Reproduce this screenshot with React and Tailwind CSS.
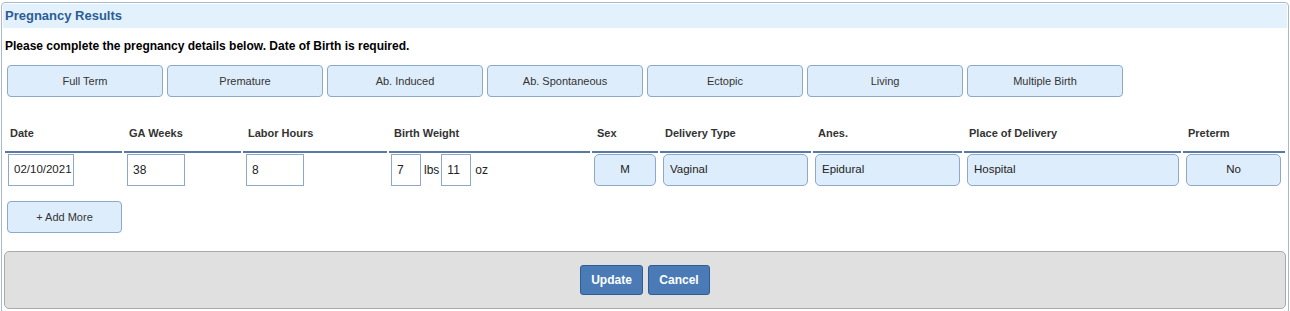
import React from "react";

const tabs = ["Full Term", "Premature", "Ab. Induced", "Ab. Spontaneous", "Ectopic", "Living", "Multiple Birth"];
const cols = ["Date", "GA Weeks", "Labor Hours", "Birth Weight", "Sex", "Delivery Type", "Anes.", "Place of Delivery", "Preterm"];

function TextBox({ value, w, size = "text-[12px]" }) {
  return (
    <div className={`h-[32px] border border-[#8ea8c8] bg-white flex items-center px-[5px] text-[#222] ${size} ${w}`}>
      {value}
    </div>
  );
}

function SelectBox({ value, w, center }) {
  return (
    <div
      className={`h-[32px] border border-[#8ea8c8] bg-[#deedfb] rounded-[5px] flex items-center text-[11.5px] text-[#222] ${
        center ? "justify-center" : "px-[6px]"
      } ${w}`}
    >
      {value}
    </div>
  );
}

export default function App() {
  return (
    <div className="bg-white min-h-[311px]" style={{ fontFamily: '"Liberation Sans", Arial, sans-serif' }}>
      <div className="ml-[1px] mt-[2px] w-[1288px] border border-[#a9b8cc] rounded-t-[4px] p-[1px] pb-[6px]">
        <div className="h-[24px] bg-[#e3f1fd] flex items-center pl-[2px] text-[13px] font-bold text-[#2b5c96]">
          Pregnancy Results
        </div>
        <div className="mt-[11px] pl-[2px] text-[12px] leading-[14px] font-bold text-black">
          Please complete the pregnancy details below. Date of Birth is required.
        </div>
        <div className="mt-[12px] pl-[4px] flex gap-[4px]">
          {tabs.map((t) => (
            <div
              key={t}
              className="w-[156px] h-[32px] border border-[#8ea8c8] bg-[#deedfb] rounded-[4px] flex items-center justify-center text-[11px] text-[#333]"
            >
              {t}
            </div>
          ))}
        </div>
        <div className="mt-[29px] pl-[2px] grid grid-cols-[117px_117px_144px_201px_66px_151px_149px_217px_102px] gap-x-[2px]">
          {cols.map((c) => (
            <div
              key={c}
              className="border-b-2 border-[#5a7aa6] pl-[5px] pb-[11px] text-[11px] leading-[14px] font-bold text-[#333]"
            >
              {c}
            </div>
          ))}
          <div className="pt-[1px] pl-[3px]">
            <TextBox value="02/10/2021" w="w-[66px]" size="text-[11.5px]" />
          </div>
          <div className="pt-[1px] pl-[3px]">
            <TextBox value="38" w="w-[58px]" />
          </div>
          <div className="pt-[1px] pl-[3px]">
            <TextBox value="8" w="w-[58px]" />
          </div>
          <div className="pt-[1px] pl-[2px] flex items-center">
            <TextBox value="7" w="w-[30px]" />
            <span className="ml-[3px] mr-[2px] text-[12px] text-[#222]">lbs</span>
            <TextBox value="11" w="w-[30px]" />
            <span className="ml-[4px] text-[12px] text-[#222]">oz</span>
          </div>
          <div className="pt-[1px] pl-[2px]">
            <SelectBox value="M" w="w-[62px]" center />
          </div>
          <div className="pt-[1px] pl-[3px]">
            <SelectBox value="Vaginal" w="w-[145px]" />
          </div>
          <div className="pt-[1px] pl-[2px]">
            <SelectBox value="Epidural" w="w-[145px]" />
          </div>
          <div className="pt-[1px] pl-[3px]">
            <SelectBox value="Hospital" w="w-[212px]" />
          </div>
          <div className="pt-[1px] pl-[3px]">
            <SelectBox value="No" w="w-[95px]" center />
          </div>
        </div>
        <div className="mt-[15px] pl-[4px]">
          <div className="w-[115px] h-[32px] border border-[#8ea8c8] bg-[#deedfb] rounded-[4px] flex items-center justify-center text-[11px] text-[#333]">
            + Add More
          </div>
        </div>
        <div className="mt-[18px] ml-[1px] w-[1282px] h-[58px] bg-[#e0e0e0] border border-[#aaaaaa] rounded-[5px] flex items-center justify-center gap-[5px]">
          <div className="w-[63px] h-[30px] bg-[#4a7bb7] border border-[#2f5d95] rounded-[3px] flex items-center justify-center text-[12px] font-bold text-white">
            Update
          </div>
          <div className="w-[62px] h-[30px] bg-[#4a7bb7] border border-[#2f5d95] rounded-[3px] flex items-center justify-center text-[12px] font-bold text-white">
            Cancel
          </div>
        </div>
      </div>
    </div>
  );
}
